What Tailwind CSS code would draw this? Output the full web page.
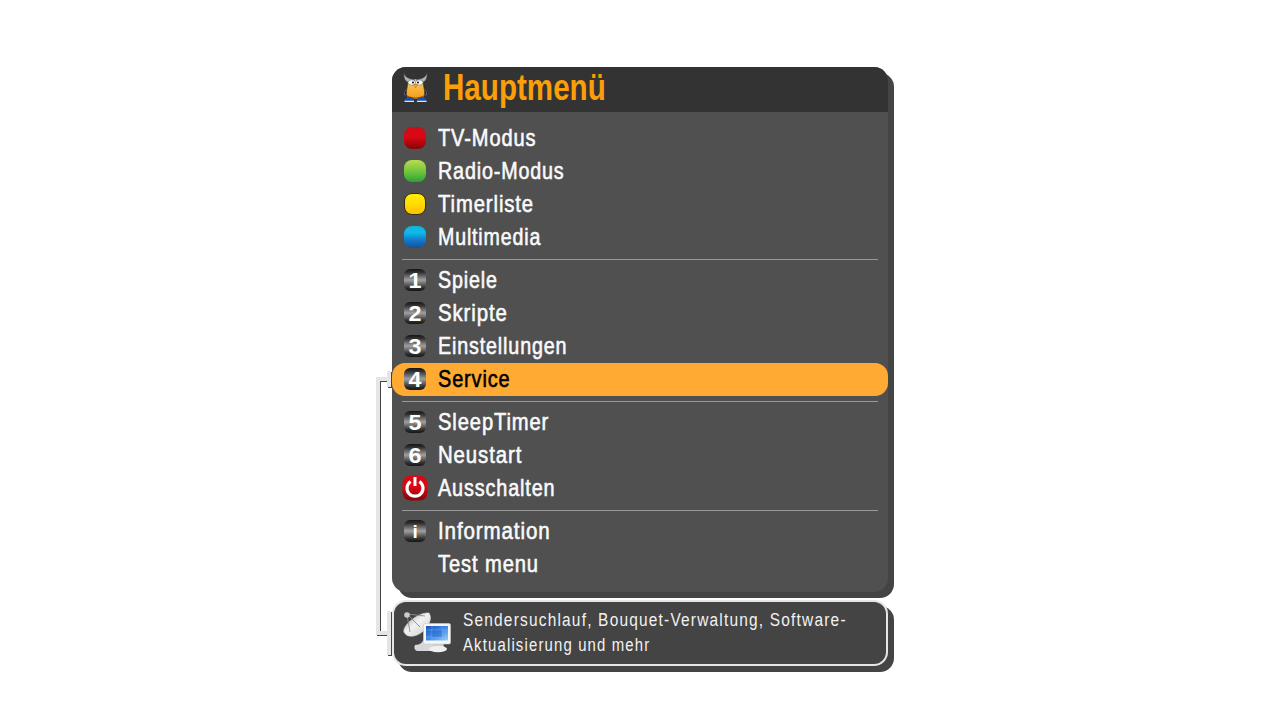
<!DOCTYPE html>
<html lang="de">
<head>
<meta charset="utf-8">
<title>Hauptmenü</title>
<script src="https://cdn.jsdelivr.net/npm/@tailwindcss/browser@4"></script>
</head>
<body class="bg-white">
<svg width="0" height="0" class="absolute">
  <defs>
    <linearGradient id="red" x2="0" y2="1"><stop stop-color="#ce0c16"/><stop offset=".45" stop-color="#dc0714"/><stop offset="1" stop-color="#850509"/></linearGradient>
    <linearGradient id="green" x2="0" y2="1"><stop stop-color="#b9dc4d"/><stop offset=".5" stop-color="#75c63f"/><stop offset="1" stop-color="#2da336"/></linearGradient>
    <linearGradient id="yellow" x2="0" y2="1"><stop stop-color="#fff000"/><stop offset=".5" stop-color="#ffdc00"/><stop offset="1" stop-color="#ffbd00"/></linearGradient>
    <linearGradient id="blue" x2="0" y2="1"><stop stop-color="#14b2dc"/><stop offset=".3" stop-color="#0dbbe8"/><stop offset=".65" stop-color="#1478c8"/><stop offset="1" stop-color="#17509c"/></linearGradient>
    <linearGradient id="key" x2="0" y2="1"><stop stop-color="#161616"/><stop offset=".15" stop-color="#303030"/><stop offset=".5" stop-color="#a0a0a0"/><stop offset=".85" stop-color="#303030"/><stop offset="1" stop-color="#161616"/></linearGradient>
    <linearGradient id="body" x2="0" y2="1"><stop stop-color="#f8cf70"/><stop offset="1" stop-color="#f59a10"/></linearGradient>
    <linearGradient id="dish" x2="1" y2="1"><stop stop-color="#8e9294"/><stop offset=".45" stop-color="#f2f2f2"/><stop offset="1" stop-color="#c8caca"/></linearGradient>
    <linearGradient id="screen" x2="1" y2="1"><stop stop-color="#1553bd"/><stop offset=".5" stop-color="#3f8ae6"/><stop offset="1" stop-color="#9ccdf8"/></linearGradient>
  </defs>
</svg>
<div class="relative mx-auto h-[720px] w-[1280px] overflow-hidden font-['Liberation_Sans',sans-serif]">
  <!-- Connector from the selected entry to its hint -->
  <svg class="absolute left-[376px] top-[368px]" width="20" height="292" shape-rendering="crispEdges">
    <path d="M5 13h7v1H5zM4 13h1v250H4zM1 267h11v1H1zM12 19h4v1h-4zM15 4h1v16h-1zM12 287h4v1h-4zM15 244h1v44h-1z" fill="#444"/>
    <path d="M0 9h12v4H4v250h8v4H0zM11 3h4v16h-4zM11 243h4v44h-4z" fill="#e5e5e5"/>
  </svg>

  <main class="ml-[392px] w-[502px] pt-[67px]">
    <section class="relative h-[531px]">
      <div class="absolute bottom-0 left-1.5 right-0 top-1.5 rounded-[14px] bg-[#444]"></div>
      <div class="relative h-[525px] w-[496px] overflow-hidden rounded-[14px] bg-[#505050]">
        <header class="flex h-[45px] items-center bg-[#333] pl-[10px]">
          <svg width="27" height="30" viewBox="0 0 27 30" class="-mt-1 shrink-0">
            <path d="M6 15L2.500 19v3l5-1M21 15l3.500 4v3l-5-1" fill="#16233e" stroke="#566a8c" stroke-width=".8"/>
            <path d="M6 9c3-4 12-4 15 0l1.500 9c1 6-2 8-9 8s-10-2-9-8z" fill="url(#body)" stroke="#3a2810" stroke-width=".6"/>
            <path d="M5 22.500q8.500 4 17 0v3H5z" fill="#bc4a12"/>
            <path d="M2 0c1 4 4 5.500 10 6.500l1 3.500C6 11 1 8 2 0zM25 0c-1 4-4 5.500-10 6.500L14 10c7 1 12-2 11-10z" fill="#b4b4b4" stroke="#444" stroke-width=".7"/>
            <ellipse cx="9.800" cy="9.500" rx="3.800" ry="2.700" fill="#f7f7f7" stroke="#555" stroke-width=".5"/><ellipse cx="17.200" cy="9.500" rx="3.800" ry="2.700" fill="#f7f7f7" stroke="#555" stroke-width=".5"/>
            <circle cx="11" cy="9.500" r="1" fill="#111"/><circle cx="16" cy="9.500" r="1" fill="#111"/>
            <path d="M11.700 11.500h3.600l-1.800 3.500z" fill="#f5ad2b" stroke="#a55c08" stroke-width=".4"/>
            <path d="M2 28q1-4 6-4 4 0 4 4zM15 28q0-4 4-4 5 0 6 4z" fill="#184f9f"/><path d="M2.500 28.300h9.500M15 28.300h9.500" stroke="#d8e9f5" stroke-width="1.200"/>
          </svg>
          <h1 class="-mt-[3px] ml-[14px] origin-left scale-x-[0.822] text-[36px] leading-none font-bold text-[#fa9f09]">Hauptmenü</h1>
        </header>
        <nav class="pt-[9px] text-[24px] leading-[33px] tracking-[1.05px] whitespace-nowrap text-[#fafafa] [-webkit-text-stroke:0.6px_currentColor]">
          <div class="flex h-[33px] items-center pl-[10px]"><svg width="26" height="26"><rect x="2" y="2" width="22" height="22" rx="8" fill="url(#red)"/></svg><span class="ml-[10px] origin-left scale-x-[0.835]">TV-Modus</span></div>
          <div class="flex h-[33px] items-center pl-[10px]"><svg width="26" height="26"><rect x="2" y="2" width="22" height="22" rx="8" fill="url(#green)"/></svg><span class="ml-[10px] origin-left scale-x-[0.82]">Radio-Modus</span></div>
          <div class="flex h-[33px] items-center pl-[10px]"><svg width="26" height="26"><rect x="2.500" y="2.500" width="21" height="21" rx="7.500" fill="url(#yellow)" stroke="#342e14" stroke-width="1"/></svg><span class="ml-[10px] origin-left scale-x-[0.845]">Timerliste</span></div>
          <div class="flex h-[33px] items-center pl-[10px]"><svg width="26" height="26"><rect x="2" y="2" width="22" height="22" rx="8" fill="url(#blue)"/></svg><span class="ml-[10px] origin-left scale-x-[0.815]">Multimedia</span></div>
          <div class="mx-[10px] mt-[6px] mb-[3px] h-px bg-[#999]"></div>
          <div class="flex h-[33px] items-center pl-[10px]"><svg width="26" height="26"><rect x="2" y="2" width="22" height="22" rx="6" fill="url(#key)"/><text x="6.500" y="20.700" textLength="13" lengthAdjust="spacingAndGlyphs" font-family="Liberation Sans" font-weight="700" font-size="22" fill="#fff" class="tracking-normal">1</text></svg><span class="ml-[10px] origin-left scale-x-[0.82]">Spiele</span></div>
          <div class="flex h-[33px] items-center pl-[10px]"><svg width="26" height="26"><rect x="2" y="2" width="22" height="22" rx="6" fill="url(#key)"/><text x="6.500" y="20.700" textLength="13" lengthAdjust="spacingAndGlyphs" font-family="Liberation Sans" font-weight="700" font-size="22" fill="#fff" class="tracking-normal">2</text></svg><span class="ml-[10px] origin-left scale-x-[0.85]">Skripte</span></div>
          <div class="flex h-[33px] items-center pl-[10px]"><svg width="26" height="26"><rect x="2" y="2" width="22" height="22" rx="6" fill="url(#key)"/><text x="6.500" y="20.700" textLength="13" lengthAdjust="spacingAndGlyphs" font-family="Liberation Sans" font-weight="700" font-size="22" fill="#fff" class="tracking-normal">3</text></svg><span class="ml-[10px] origin-left scale-x-[0.82]">Einstellungen</span></div>
          <div class="-mb-px flex h-[34px] items-start pt-px"><div class="flex h-[33px] w-full items-center rounded-[13px] bg-[#ffab33] pb-[2px] pl-[10px] text-black"><svg width="26" height="26"><rect x="2" y="2" width="22" height="22" rx="6" fill="url(#key)"/><text x="6.500" y="20.700" textLength="13" lengthAdjust="spacingAndGlyphs" font-family="Liberation Sans" font-weight="700" font-size="22" fill="#fff" class="tracking-normal text-white">4</text></svg><span class="ml-[10px] origin-left scale-x-[0.83]">Service</span></div></div>
          <div class="mx-[10px] mt-[6px] mb-[3px] h-px bg-[#999]"></div>
          <div class="flex h-[33px] items-center pl-[10px]"><svg width="26" height="26"><rect x="2" y="2" width="22" height="22" rx="6" fill="url(#key)"/><text x="6.500" y="20.700" textLength="13" lengthAdjust="spacingAndGlyphs" font-family="Liberation Sans" font-weight="700" font-size="22" fill="#fff" class="tracking-normal">5</text></svg><span class="ml-[10px] origin-left scale-x-[0.84]">SleepTimer</span></div>
          <div class="flex h-[33px] items-center pl-[10px]"><svg width="26" height="26"><rect x="2" y="2" width="22" height="22" rx="6" fill="url(#key)"/><text x="6.500" y="20.700" textLength="13" lengthAdjust="spacingAndGlyphs" font-family="Liberation Sans" font-weight="700" font-size="22" fill="#fff" class="tracking-normal">6</text></svg><span class="ml-[10px] origin-left scale-x-[0.85]">Neustart</span></div>
          <div class="flex h-[33px] items-center pl-[10px]"><svg width="26" height="26"><rect x=".5" y=".5" width="25" height="25" rx="8" fill="url(#red)"/><path d="M8.600 6.500a8 8 0 1 0 8.800 0" fill="none" stroke="#fff" stroke-width="3.200"/><path d="M13 2v9" stroke="#fff" stroke-width="3"/></svg><span class="ml-[10px] origin-left scale-x-[0.825]">Ausschalten</span></div>
          <div class="mx-[10px] mt-[6px] mb-[3px] h-px bg-[#999]"></div>
          <div class="flex h-[33px] items-center pl-[10px]"><svg width="26" height="26"><rect x="2" y="2" width="22" height="22" rx="6" fill="url(#key)"/><text x="10.500" y="20" font-family="Liberation Sans" font-weight="700" font-size="19" fill="#fff" class="tracking-normal">i</text></svg><span class="ml-[10px] origin-left scale-x-[0.855]">Information</span></div>
          <div class="flex h-[33px] items-center pl-[46px]"><span class="origin-left scale-x-[0.84]">Test menu</span></div>
        </nav>
      </div>
    </section>

    <section class="relative mt-[2px] h-[72px]">
      <div class="absolute bottom-0 left-1.5 right-0 top-1.5 rounded-[14px] bg-[#444]"></div>
      <div class="relative flex h-[66px] w-[496px] items-center rounded-[14px] border-2 border-[#e6e6e6] bg-[#444] pl-[9px]">
        <svg width="50" height="44" viewBox="0 0 50 44" class="shrink-0">
          <path d="M12 34q8 0 10-9l9 3v12H14q-4-2-2-6z" fill="#d5d7d8"/>
          <path d="M1 21C-1 15 15 1 26 2q4 6-3 15C16 26 4 28 1 21z" fill="url(#dish)" stroke="#e4e4e4" stroke-width=".6"/>
          <path d="M4 3l13 13M4 4l3 17M4 3l18 2" stroke="#8b8e90" stroke-width=".9"/>
          <circle cx="4" cy="4" r="2.800" fill="#c9cccd"/>
          <path d="M31 31h9l1 5H30z" fill="#c7cccf"/><ellipse cx="35" cy="38" rx="9" ry="3.200" fill="#f0f0f0"/>
          <rect x="20.500" y="12.500" width="27" height="20.500" rx="1.500" fill="#f5f5f5" stroke="#c9cdd0" stroke-width=".6"/>
          <rect x="23" y="15" width="22" height="14.500" fill="url(#screen)"/>
          <path d="M29 15v14M39 15v14M23 19h22M23 26h22" stroke="#8bbff5" stroke-opacity=".4"/>
          <rect x="29" y="19" width="10" height="7" fill="#256bcf" opacity=".5"/>
        </svg>
        <p class="ml-[10px] w-[400px] shrink-0 text-[18px] leading-[25px] tracking-[1.4px] whitespace-nowrap text-[#f2f2f2]"><span class="block origin-left scale-x-[0.858]">Sendersuchlauf, Bouquet-Verwaltung, Software-</span><span class="block origin-left scale-x-[0.828]">Aktualisierung und mehr</span></p>
      </div>
    </section>
  </main>
</div>
</body>
</html>
